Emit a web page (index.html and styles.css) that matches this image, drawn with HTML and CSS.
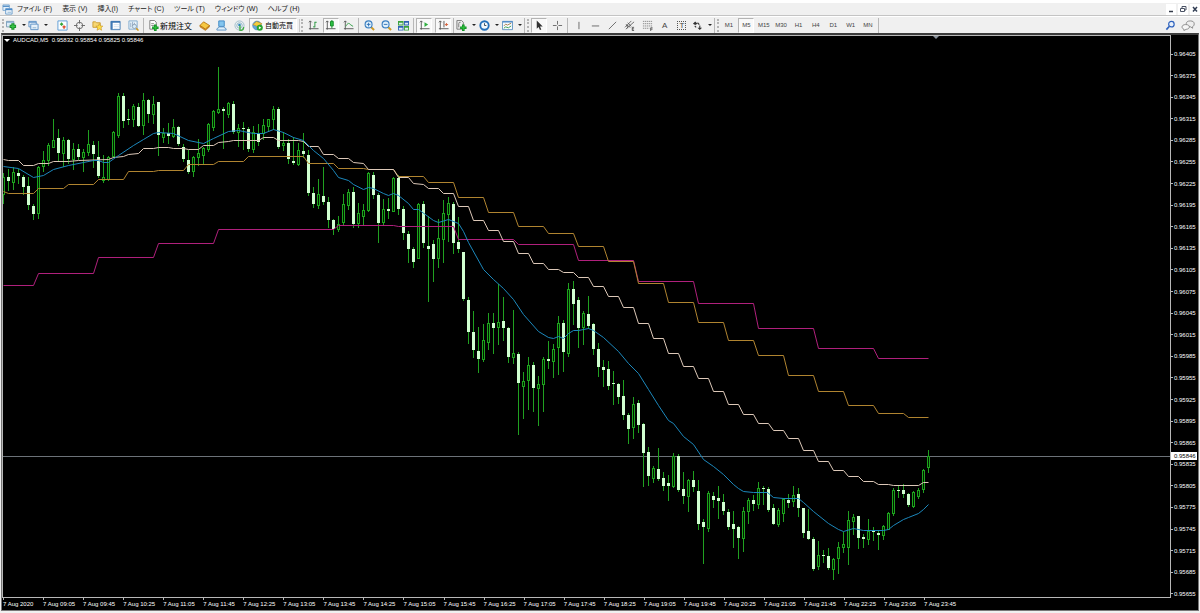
FILE: index.html
```html
<!DOCTYPE html>
<html lang="ja">
<head>
<meta charset="utf-8">
<title>AUDCAD,M5</title>
<link rel="stylesheet" href="styles.css">
</head>
<body>
<header class="menubar">
  <svg class="app-icon" viewBox="0 0 12 12"><path d="M1 1h7v6H1z" fill="#e4f1fb" stroke="#7fa9cf"/><path d="M1 2.500h7" stroke="#5b93c8" stroke-width="1.500"/><path d="M4 5h7v6H4z" fill="#f2f8fd" stroke="#6a9cca"/><path d="M4 6h7" stroke="#4a8aca" stroke-width="1.500"/><path d="M6 9h4" stroke="#8ab0d0"/></svg>
  <nav class="menu">
    <button>ファイル (F)</button><button>表示 (V)</button><button>挿入(I)</button><button>チャート (C)</button><button>ツール (T)</button><button>ウィンドウ (W)</button><button>ヘルプ (H)</button>
  </nav>
  <div class="window-buttons">
    <button aria-label="最小化"><svg viewBox="0 0 10 10"><path d="M3 7.500h4" stroke="#333a48" stroke-width="1.500"/></svg></button>
    <button aria-label="元に戻す"><svg viewBox="0 0 10 10"><path d="M4 4V2.500h4V6H6.500M2.500 4.500h4v3h-4z" fill="none" stroke="#4a5264"/></svg></button>
    <button aria-label="閉じる"><svg viewBox="0 0 10 10"><path d="M3 3l4 4.500M7 3L3 7.500" stroke="#333f55" stroke-width="1.500"/></svg></button>
  </div>
</header>
<div class="toolbar" role="toolbar">
  <i class="handle"></i>
  <div class="group w42">
    <button class="tool caret" aria-label="新規チャート"><svg viewBox="0 0 12 12"><path d="M.5 1.500h8v6h-8z" fill="#dcecf8" stroke="#7898b4"/><path d="M.5 2.500h8" stroke="#7da8cc"/><path d="M7.500 3.500v7M4 7h7" stroke="#17902a" stroke-width="3.400"/><path d="M7.500 4.500v5M5 7h5" stroke="#39c548" stroke-width="1.400"/></svg></button>
    <button class="tool caret" aria-label="プロファイル"><svg viewBox="0 0 12 12"><path d="M1 1.500h8v6H1z" fill="#e6f1fa" stroke="#5b8fc4"/><path d="M1 2.500h8" stroke="#5b8fc4"/><path d="M3 4.500h8v6H3z" fill="#e6f1fa" stroke="#5b8fc4"/><path d="M5 8.500h4" stroke="#8db1cc"/></svg></button>
  </div>
  <div class="group first w91">
    <button class="tool" aria-label="気配値表示"><svg viewBox="0 0 12 12"><path d="M1 1h10v10H1z" fill="#fafdff" stroke="#5a9ad4"/><path d="M3 4.500l2-2 2 2-2 2z" fill="#32a536"/><path d="M6 7.500h3.500M7.700 6v3.500" stroke="#dd4a26" stroke-width="1.600"/></svg></button>
    <button class="tool" aria-label="データウィンドウ"><svg viewBox="0 0 12 12"><circle cx="6" cy="6" r="3.500" fill="none" stroke="#666"/><path d="M6 0v4M6 8v4M0 6h4M8 6h4" stroke="#666"/></svg></button>
    <button class="tool" aria-label="ナビゲーター"><svg viewBox="0 0 12 12"><path d="M1 2h3l1 1h4v5H1z" fill="#f7d774" stroke="#c99b35"/><path d="M8 4l1.200 2.500 2.600.2-2 1.800.7 2.700L8 9.800l-2.500 1.400.7-2.700-2-1.800 2.600-.2z" fill="#ffdf45" stroke="#c8982a" stroke-width=".7"/></svg></button>
    <button class="tool" aria-label="ターミナル"><svg viewBox="0 0 12 12"><path d="M1 1.500h10v9H1z" fill="#fff" stroke="#3f79b4"/><path d="M1 2h10M2 2v8" stroke="#3f79b4" stroke-width="1.800"/><path d="M4 5h6M4 7h6M4 9h6" stroke="#c3d9eb" stroke-width=".7"/></svg></button>
    <button class="tool" aria-label="ストラテジーテスター"><svg viewBox="0 0 12 12"><path d="M1 1h9v9H1z" fill="#e9f3fb" stroke="#7fa9cc"/><path d="M3 3v5M5 2v5M7 3v3" stroke="#8fabc4"/><circle cx="7" cy="7" r="2.300" fill="#d6ecfa" stroke="#7d8fa4" stroke-width=".8"/><path d="M9 9l2.500 2.500" stroke="#d29922" stroke-width="1.700"/></svg></button>
  </div>
  <i class="sep"></i>
  <button class="tool labelled order"><svg viewBox="0 0 12 12"><path d="M2 .5h5l2 2V10H2z" fill="#fff" stroke="#777"/><path d="M3.500 4h3M3.500 6h3" stroke="#888"/><path d="M8 5v7M4.500 8.500h7" stroke="#109122" stroke-width="2.800"/><path d="M8 6v5M5.500 8.500h5" stroke="#32c440"/></svg>新規注文</button>
  <div class="group second w53">
    <button class="tool" aria-label="メタエディター"><svg viewBox="0 0 12 12"><path d="M1 6l4-4 6.500 4L7 10z" fill="#f6c843" stroke="#b97a17"/><path d="M1 6v1.500L7 11.500l4.500-4V6L7 10z" fill="#d98d20" stroke="#a86c12" stroke-width=".5"/></svg></button>
    <button class="tool" aria-label="コミュニティ"><svg viewBox="0 0 12 12"><path d="M3 1h6v6H3z" fill="#83c5ef" stroke="#3e88c4"/><path d="M1 11V9.500l3-2h4l3 2V11z" fill="#dceefa" stroke="#5b93c4"/></svg></button>
    <button class="tool" aria-label="シグナル"><svg viewBox="0 0 12 12"><circle cx="6" cy="6" r="5" fill="none" stroke="#9ebccc"/><circle cx="6" cy="6" r="3" fill="none" stroke="#8ab4c6"/><circle cx="6" cy="5.500" r="1.400" fill="#2884c0"/><path d="M6.500 6v5.500c3 0 4-2 4-4" fill="none" stroke="#43ad46" stroke-width="1.500"/></svg></button>
  </div>
  <button class="tool labelled auto pressed" aria-pressed="true"><svg viewBox="0 0 12 12"><circle cx="5.500" cy="6" r="4.800" fill="#62a7db" stroke="#447aa8" stroke-width=".6"/><path d="M1 5l4-3.500L11 4 6 7z" fill="#f4cc41" stroke="#bd8e1c" stroke-width=".6"/><circle cx="8.500" cy="8.500" r="3.300" fill="#26a52e"/><path d="M7.500 6.800v3.400l2.700-1.700z" fill="#fff"/></svg>自動売買</button>
  <i class="handle wide"></i>
  <div class="group w51">
    <button class="tool" aria-label="バーチャート"><svg viewBox="0 0 12 12"><path d="M2.500 1v9.500M1 9.500h10.500M1 2.500l1.500-1.500L4 2.500" fill="none" stroke="#555"/><path d="M7.500 2v6M7.500 2.500h2M5.500 7.500h2" stroke="#23943a"/></svg></button>
    <button class="tool pressed" aria-label="ローソク足" aria-pressed="true"><svg viewBox="0 0 12 12"><path d="M2.500 1v9.500M1 9.500h10.500M1 2.500l1.500-1.500L4 2.500" fill="none" stroke="#555"/><path d="M7.500 0v9" stroke="#168c28"/><path d="M6 1.500h3v5H6z" fill="#2cc244" stroke="#168c28"/></svg></button>
    <button class="tool" aria-label="ラインチャート"><svg viewBox="0 0 12 12"><path d="M2.500 1v9.500M1 9.500h10.500M1 2.500l1.500-1.500L4 2.500" fill="none" stroke="#555"/><path d="M3 7c2-4 4-4 5-2l3 2" fill="none" stroke="#2d9c42"/></svg></button>
  </div>
  <i class="sep"></i>
  <div class="group w50">
    <button class="tool" aria-label="ズームイン"><svg viewBox="0 0 12 12"><path d="M7.500 7.500L11 11" stroke="#cf9a26" stroke-width="2.200"/><circle cx="5" cy="4.800" r="3.800" fill="#dff0fc" stroke="#3b7fc0" stroke-width="1.200"/><path d="M5 3v4M3 4.800h4" stroke="#2f70b5"/></svg></button>
    <button class="tool" aria-label="ズームアウト"><svg viewBox="0 0 12 12"><path d="M7.500 7.500L11 11" stroke="#cf9a26" stroke-width="2.200"/><circle cx="5" cy="4.800" r="3.800" fill="#dff0fc" stroke="#3b7fc0" stroke-width="1.200"/><path d="M3 4.800h4" stroke="#2f70b5"/></svg></button>
    <button class="tool" aria-label="整列"><svg viewBox="0 0 12 12"><path d="M0 1h6v5H0zM6.500 6.500h5.500v5H6.500z" fill="#3ba23a"/><path d="M6.500 1H12v5H6.500zM0 6.500h6v5H0z" fill="#2d62b4"/><path d="M1 3h4v2H1zM7.500 3H11v2H7.500zM1 8.500h4v2H1zM7.500 8.500H11v2H7.500z" fill="#e0edf5"/></svg></button>
  </div>
  <i class="sep"></i>
  <div class="group w35">
    <button class="tool pressed" aria-label="自動スクロール" aria-pressed="true"><svg viewBox="0 0 12 12"><path d="M2.500 1v9.500M1 9.500h10.500M1 2.500l1.500-1.500L4 2.500" fill="none" stroke="#555"/><path d="M6 2.500v5l4-2.500z" fill="#2fae3f"/></svg></button>
    <button class="tool pressed" aria-label="チャートシフト" aria-pressed="true"><svg viewBox="0 0 12 12"><path d="M2.500 1v9.500M1 9.500h10.500M1 2.500l1.500-1.500L4 2.500M6.500 1v7" fill="none" stroke="#555"/><path d="M11 5H9M9.500 3.500L8 5l1.500 1.500" stroke="#d2532c" fill="#d2532c"/></svg></button>
  </div>
  <i class="sep"></i>
  <div class="group w66">
    <button class="tool caret" aria-label="インディケータ"><svg viewBox="0 0 12 12"><path d="M1 .5h5l2 2V10H1z" fill="#eee" stroke="#777"/><path d="M3 8V4q0-2 2-1.500" fill="none" stroke="#777"/><path d="M8 5v7M4.500 8.500h7" stroke="#109122" stroke-width="2.800"/><path d="M8 6v5M5.500 8.500h5" stroke="#32c440"/></svg></button>
    <button class="tool caret" aria-label="時間足"><svg viewBox="0 0 12 12"><circle cx="6" cy="6" r="4.600" fill="#f1f8fd" stroke="#226fba" stroke-width="2"/><path d="M6 3.500V6h2" fill="none" stroke="#345"/></svg></button>
    <button class="tool caret" aria-label="定型チャート"><svg viewBox="0 0 12 12"><path d="M.5 1.500h11v9H.5z" fill="#f5faff" stroke="#5f92bf"/><path d="M.5 2h11" stroke="#4d8aca" stroke-width="1.500"/><path d="M2 6.500l2-2 2 1 4-2" fill="none" stroke="#a47a45"/><path d="M2 9l2-1.500 3 1 3-2" fill="none" stroke="#3a9d46"/></svg></button>
  </div>
  <i class="sep"></i>
  <i class="handle"></i>
  <div class="group w34">
    <button class="tool pressed" aria-label="カーソル" aria-pressed="true"><svg viewBox="0 0 12 12"><path d="M3 .5v9l2-2 1.500 3.500 1.500-.7L6.500 7H9.500z" fill="#333"/></svg></button>
    <button class="tool" aria-label="十字カーソル"><svg viewBox="0 0 12 12"><path d="M6 1v4M6 7v4M1 6h4M7 6h4" stroke="#666"/></svg></button>
  </div>
  <i class="sep"></i>
  <div class="group w120">
    <button class="tool" aria-label="垂直線"><svg viewBox="0 0 12 12"><path d="M6.500 2v8" stroke="#666"/></svg></button>
    <button class="tool" aria-label="水平線"><svg viewBox="0 0 12 12"><path d="M2 6.500h8" stroke="#666"/></svg></button>
    <button class="tool" aria-label="トレンドライン"><svg viewBox="0 0 12 12"><path d="M2 10l8-8" stroke="#666"/></svg></button>
    <button class="tool" aria-label="チャネル"><svg viewBox="0 0 12 12"><path d="M1 8l7-7M2 10l9-8M2 5l5 3M4 3l4 4M3 5l1 4" stroke="#555" stroke-width=".9"/><path d="M11 8H9v3.500h2M9 9.700h2" fill="none" stroke="#333" stroke-width=".8"/></svg></button>
    <button class="tool" aria-label="フィボナッチ"><svg viewBox="0 0 12 12"><path d="M1 1.500h10M1 4h10M1 6.500h10M1 9h7" stroke="#888" stroke-dasharray="1.500 .7"/><path d="M9.500 12V8.500h2M9.500 10h2" fill="none" stroke="#333" stroke-width=".8"/></svg></button>
    <button class="tool glyph">A</button>
    <button class="tool glyph" aria-label="テキストラベル"><span class="boxed">T</span></button>
  </div>
  <button class="tool caret arrows" aria-label="矢印"><svg viewBox="0 0 12 12"><path d="M1 4l2.500-2.500L6 4 3.500 5.500zM6 8.500h5L8.500 11z" fill="#333"/><path d="M3 6.500l1.500 1.500M6 3l2 2M8.500 6v3" stroke="#333" stroke-width="1.200"/></svg></button>
  <i class="sep"></i>
  <i class="handle"></i>
  <div class="group w155 periods">
    <button class="tool">M1</button><button class="tool pressed" aria-pressed="true">M5</button><button class="tool">M15</button><button class="tool">M30</button><button class="tool">H1</button><button class="tool">H4</button><button class="tool">D1</button><button class="tool">W1</button><button class="tool">MN</button>
  </div>
  <i class="sep"></i>
  <div class="right-tools">
    <button class="tool" aria-label="検索"><svg viewBox="0 0 12 12"><circle cx="7" cy="4.500" r="3" fill="#e9f1fb" stroke="#2e62bd" stroke-width="1.300"/><path d="M4.800 6.800L1.500 10.500" stroke="#2e62bd" stroke-width="1.800"/></svg></button>
    <button class="tool" aria-label="チャット"><svg class="chat" viewBox="0 0 15 12"><path d="M10 1c3 0 4.300 1.400 4.300 3.200S13 7.200 12.500 7.300V9L10.500 7.500C7 7.500 5.500 6 5.500 4.200S7 1 10 1z" fill="#eee" stroke="#888"/><path d="M5 5c2.700 0 4 1 4 2.600S7.500 10 5.500 10.200L3 11.500V10C1.500 9.500 1 8.500 1 7.600 1 6 2.500 5 5 5z" fill="#f6f6f6" stroke="#888"/></svg></button>
  </div>
</div>
<main class="chart">
  <section class="plot">
    <svg id="plot" viewBox="3 36 1167 561" preserveAspectRatio="none" role="img" aria-label="AUDCAD M5"></svg>
    <h1 class="symbol"><span class="down"></span>AUDCAD,M5&nbsp; 0.95832 0.95854 0.95825 0.95846</h1>
  </section>
  <aside class="prices"><ol id="prices"></ol><output class="last">0.95846</output></aside>
  <ol class="times" id="times"></ol>
</main>
<script src="chart.js"></script>
</body>
</html>
```
FILE: styles.css
```css
* { box-sizing: border-box; }
body {
  margin: 0;
  height: 100vh;
  display: flex;
  flex-direction: column;
  background: #f0f0f0;
  border-top: 3px solid #fff;
  font-family: "Liberation Sans", "Noto Sans CJK JP", sans-serif;
  font-size: 6px;
  color: #222;
  overflow: hidden;
}
button {
  margin: 0;
  padding: 0;
  border: 0;
  background: none;
  font: inherit;
  color: inherit;
  white-space: nowrap;
}
ol { list-style: none; margin: 0; padding: 0; }
svg { display: block; }

.menubar {
  flex: none;
  display: flex;
  align-items: center;
  height: 13px;
  padding-left: 2px;
  border-bottom: 1px solid #c4c4c4;
}
.app-icon { width: 11px; height: 11px; margin-right: 4px; }
.menu {
  display: flex;
  gap: 10px;
  font-size: 7px;
  line-height: 12px;
  font-feature-settings: "palt";
}
.window-buttons { display: flex; gap: 2px; margin-left: auto; }
.window-buttons button { width: 10px; height: 11px; background: #fff; }
.window-buttons svg { width: 10px; height: 10px; }

.toolbar {
  flex: none;
  display: flex;
  align-items: center;
  gap: 2px;
  height: 17px;
  padding: 0 4px 0 2px;
  border-top: 1px solid #fff;
}
.toolbar > * { flex: none; }
.handle { width: 2px; height: 13px; border-left: 2px dotted #b4b4b4; }
.handle.wide { width: 4px; border-left: 1px solid #c8c8c8; border-right: 2px dotted #b4b4b4; }
.sep { width: 1px; height: 15px; background: #b8b8b8; }
.group { display: flex; justify-content: space-between; }
.first { padding-left: 4px; }
.second { padding-left: 2px; }
.w34 { width: 34px; }
.w35 { width: 35px; }
.w42 { width: 42px; }
.w50 { width: 50px; }
.w51 { width: 51px; }
.w53 { width: 53px; }
.w66 { width: 66px; }
.w91 { width: 91px; }
.w120 { width: 120px; }
.w155 { width: 155px; }
.tool {
  display: flex;
  align-items: center;
  justify-content: center;
  width: 16px;
  height: 15px;
}
.tool svg { flex: none; width: 11px; height: 11px; }
.tool svg.chat { width: 14px; }
.tool.caret { width: 20px; justify-content: space-between; }
.tool.caret::after {
  content: "";
  border: 2px solid transparent;
  border-top-color: #222;
  border-bottom: 0;
}
.pressed { background: #f9f9f9; border: 1px solid #fff; border-top-color: #b4b4b4; border-left-color: #b4b4b4; }
.labelled {
  gap: 1px;
  justify-content: flex-start;
  font-family: "Noto Sans CJK JP", sans-serif;
  font-size: 7px;
  color: #000;
}
.order { width: 46px; padding-left: 2px; font-size: 8px; }
.auto { width: 48px; padding-left: 2px; gap: 2px; }
.glyph { font-size: 8px; color: #444; }
.boxed { width: 9px; height: 9px; border: 1px dotted #555; line-height: 8px; }
.periods { color: #444; }
.right-tools { display: flex; gap: 2px; margin-left: auto; }

.chart {
  flex: 1;
  min-height: 0;
  display: grid;
  grid-template-columns: minmax(0, 1fr) 27px;
  grid-template-rows: minmax(0, 1fr) 12px;
  margin: 0 1px 2px 1px;
  border: 1px solid #777;
  border-top: 2px solid #3c3c3c;
  background: #000;
  color: #fff;
}
.plot { position: relative; border: 1px solid #b8b8b8; }
.plot > svg { width: 100%; height: 100%; }
.symbol {
  position: absolute;
  top: 0;
  left: 1px;
  display: flex;
  align-items: center;
  gap: 3px;
  margin: 0;
  font-size: 6px;
  font-weight: normal;
  line-height: 8px;
}
.down { border: 3px solid transparent; border-top-color: #fff; border-bottom: 0; }
.prices { position: relative; padding-top: 15px; }
.prices ol { height: 100%; display: flex; flex-direction: column; justify-content: space-between; }
.prices li { display: flex; align-items: center; gap: 1px; line-height: 8px; }
.prices li::before { content: ""; width: 2px; height: 1px; background: #b8b8b8; }
.last {
  position: absolute;
  top: 74%;
  left: 0;
  right: 1px;
  padding-left: 3px;
  line-height: 8px;
  background: #fff;
  color: #000;
}
.times { grid-column: 1 / -1; display: flex; margin-right: 27px; padding-left: 1px; }
.times li { position: relative; flex: 0 0 3.43%; padding-top: 2px; line-height: 8px; white-space: nowrap; }
.times li::before { content: ""; position: absolute; top: 0; left: 0; width: 1px; height: 2px; background: #b8b8b8; }

.average { fill: none; stroke-width: 1; }
.slow { stroke: #b0207c; }
.medium { stroke: #b08430; }
.fast { stroke: #dcc8b8; }
.smooth { stroke: #1c88bc; }
.bid { stroke: #6c7278; }
.candle { shape-rendering: crispEdges; }
.wick { fill: #20a020; }
.rise { fill: #001a00; stroke: #1ca41c; }
.fall { fill: #d0ffd0; }
.shift { fill: #8a929c; }
```
FILE: chart.js
```js
// One entry per bar: high, body top, body bottom, low; "r" marks a rising bar.
const bars = `
173,177,194,203r 169,177,181,190 167,172,182,189r 169,173,176,183 175,177,187,194 177,186,205,209 204,206,214,219 166,167,213,218r
151,160,166,171r 143,145,160,165r 119,140,147,147r 129,138,153,160 137,140,153,166r 139,140,159,163 143,149,159,169r 144,149,157,159
149,152,157,171r 130,144,152,155r 141,145,154,167 141,157,176,177 155,177,180,182r 156,157,179,180r 131,132,156,157r 93,96,135,137r
93,96,121,127 109,119,120,124 104,106,119,126r 103,107,126,126 93,100,125,134r 99,100,114,122 96,104,114,123r 102,102,135,155
128,133,137,142r 123,133,136,143 119,127,136,137r 126,127,144,145 144,147,159,161 150,160,172,173 156,157,171,176r 139,153,157,165r
147,148,155,164r 123,124,149,151r 110,111,127,130r 67,109,112,113r 107,109,111,148 102,103,114,117r 101,104,132,133 124,128,132,146r
122,128,129,149 127,129,149,151 126,132,149,152r 124,133,142,145 119,125,133,139r 119,119,126,131r 106,109,119,129r 107,109,147,148
132,143,145,150r 139,143,159,163 137,161,163,164 143,150,164,165r 133,151,154,157 150,155,193,195 187,193,204,207 179,194,205,208r
167,196,202,204 197,202,220,227 219,220,229,234 216,224,229,231r 194,204,222,224r 189,192,205,209r 187,192,224,227 203,213,223,227r
204,210,216,225r 172,173,210,211r 172,175,195,198 193,195,223,242 199,209,222,224r 198,209,211,218 177,178,211,211r 175,178,209,214
206,209,233,239 231,234,249,262 247,249,262,267 203,204,258,258r 201,204,243,247 216,246,249,301 240,244,259,281 219,238,258,267r
200,213,239,262r 197,203,214,241r 202,204,243,253 217,242,249,252 252,252,299,300 297,300,332,343 311,332,350,357 327,351,359,372
324,340,359,361r 313,323,342,349r 313,323,328,353 284,322,327,344r 297,321,328,340 327,328,357,362 310,353,357,363r 352,354,383,434
372,381,386,418r 357,365,380,409r 362,365,388,411 376,384,388,425r 357,359,384,411r 341,359,361,368 344,349,361,377r 316,323,347,374r
320,323,352,371 283,289,353,356r 281,289,304,324 297,300,328,347 311,313,327,344r 296,314,326,328 323,324,349,354 343,349,367,376
360,367,370,386 361,369,386,389 371,383,384,404 383,384,397,403 380,396,415,419 413,415,429,443 397,404,427,438r 400,403,425,432
423,424,453,486 447,452,476,485 466,468,478,482r 448,469,479,480 472,478,486,490 475,483,486,500 453,456,486,487r 454,456,490,491
472,489,496,503 479,480,496,511r 471,480,487,491 480,491,524,529 519,522,527,563 491,493,528,531r 492,496,500,507 486,498,501,518
494,502,511,514 509,512,527,529 511,524,529,547 526,527,538,558 507,511,538,551r 498,500,511,523r 495,500,504,510 482,488,504,508r
486,488,489,504 487,489,510,511 504,508,524,524 508,510,524,526r 498,499,513,521r 494,500,503,507 486,495,501,506r 488,494,508,516
498,499,513,523r 498,500,502,507 486,495,501,506r 488,494,508,515 508,508,533,537 509,531,539,539 537,539,569,570 541,555,566,569r
550,555,556,562 548,556,568,569 558,559,569,579r 542,547,558,573r 532,544,547,552r 511,520,547,564r 514,517,521,534r 516,516,538,548
534,537,539,547 519,531,539,544r 527,530,532,540 531,533,535,549 525,526,535,539r 512,513,529,529r 488,490,513,515r 486,490,491,497
484,490,494,497 493,494,505,506 491,492,506,507r 488,490,496,498r 469,470,489,492r 450,456,467,472r`.trim().split(/\s+/);
bars.splice(160, 4);

const averages = {
  slow: "3,285 33,285 38,273 93,273 98,257 153,257 158,243 213,243 218,229 333,229 338,225 393,225 398,226 453,226 458,239 513,239 518,244 573,244 578,260 633,260 638,281 693,281 698,303 753,303 758,328 813,328 818,348 873,348 878,358 928,358",
  medium: "3,191 8,193 33,193 38,188 63,188 68,184 93,184 98,179 123,179 128,171 153,171 158,170 183,170 188,164 213,164 218,161 243,161 248,156 303,156 308,163 333,163 338,168 363,168 368,169 393,169 398,176 423,176 428,182 453,182 458,197 483,197 488,212 513,212 518,226 543,226 548,233 573,233 578,246 603,246 608,261 633,261 638,283 663,283 668,302 693,302 698,322 723,322 728,340 753,340 758,355 783,355 788,375 813,375 818,391 843,391 848,405 873,405 878,413 903,413 908,417 928,417",
  fast: "3,159 8,160 18,160 23,165 33,165 38,163 48,163 53,161 68,161 78,160 108,159 113,157 123,156 128,154 138,153 143,148 153,148 158,147 168,147 173,148 183,148 188,149 198,149 203,145 213,145 218,142 228,141 233,140 258,140 263,137 273,137 278,140 298,140 303,141 308,146 318,146 323,154 333,154 338,158 348,158 353,162 363,163 368,169 393,169 398,177 408,177 413,183 423,184 428,188 438,188 443,193 453,193 458,206 468,206 473,220 483,220 488,230 498,230 503,241 513,241 518,253 528,253 533,263 543,263 548,269 558,269 563,272 573,272 578,277 588,277 593,286 603,286 608,296 618,296 623,307 633,307 638,323 648,323 653,338 663,338 668,353 678,353 683,366 693,366 698,378 708,378 713,391 723,391 728,404 738,404 743,414 753,414 758,423 768,423 773,430 783,430 788,438 798,438 803,450 813,450 818,461 828,461 833,470 843,470 848,476 858,476 863,481 873,481 878,484 888,484 893,485 918,485 923,482 928,482",
  smooth: "3,166 18,168 33,177 43,175 53,169 68,165 83,162 93,160 98,160 103,162 108,162 118,155 133,145 143,139 153,133 158,132 173,133 188,140 203,143 213,138 228,131 238,130 248,132 253,133 263,133 273,129 283,132 293,137 303,140 313,150 323,158 333,170 338,177 348,180 353,184 363,189 368,187 373,188 383,193 388,195 393,193 398,195 408,203 413,209 418,209 433,220 438,222 448,219 458,223 463,231 468,242 483,269 493,279 503,288 513,299 523,314 538,331 548,337 553,338 558,336 563,338 568,333 573,330 578,330 583,329 588,328 593,330 603,337 618,351 628,363 638,373 648,389 658,405 668,420 673,423 683,436 693,444 703,459 713,466 723,474 733,484 738,488 743,491 753,492 767,492 773,497 783,498 798,498 803,502 813,511 828,523 838,529 843,531 853,528 863,530 883,530 888,529 893,525 903,519 908,517 918,513 923,509 928,504"
};

let drawing = '<path class="bid" d="M3 456.5H1170"/>';
drawing += '<g class="candle">';
bars.forEach((bar, i) => {
  const rising = bar.endsWith("r");
  const [high, top, bottom, low] = bar.split(",").map(v => parseInt(v, 10));
  const x = 3 + i * 5;
  drawing += `<rect class="wick" x="${x}" y="${high}" width="1" height="${low - high + 1}"/>`;
  drawing += rising
    ? `<rect class="rise" x="${x - 0.5}" y="${top + 0.5}" width="2" height="${Math.max(1, bottom - top)}"/>`
    : `<rect class="fall" x="${x - 1}" y="${top}" width="3" height="${Math.max(1, bottom - top)}"/>`;
});
drawing += "</g>";
for (const [name, points] of Object.entries(averages)) {
  drawing += `<polyline class="average ${name}" transform="translate(.5 .5)" points="${points}"/>`;
}
drawing += '<path class="shift" d="M933 36h6l-3 3z"/>';
document.getElementById("plot").innerHTML = drawing;

const prices = [];
for (let p = 96405; p >= 95655; p -= 30) prices.push(`<li>0.${p}</li>`);
document.getElementById("prices").innerHTML = prices.join("");

const pad = n => String(n).padStart(2, "0");
const times = ["<li>7 Aug 2020</li>"];
for (let m = 9 * 60 + 5; m <= 23 * 60 + 45; m += 40) {
  times.push(`<li>7 Aug ${pad(Math.floor(m / 60))}:${pad(m % 60)}</li>`);
}
document.getElementById("times").innerHTML = times.join("");
```
